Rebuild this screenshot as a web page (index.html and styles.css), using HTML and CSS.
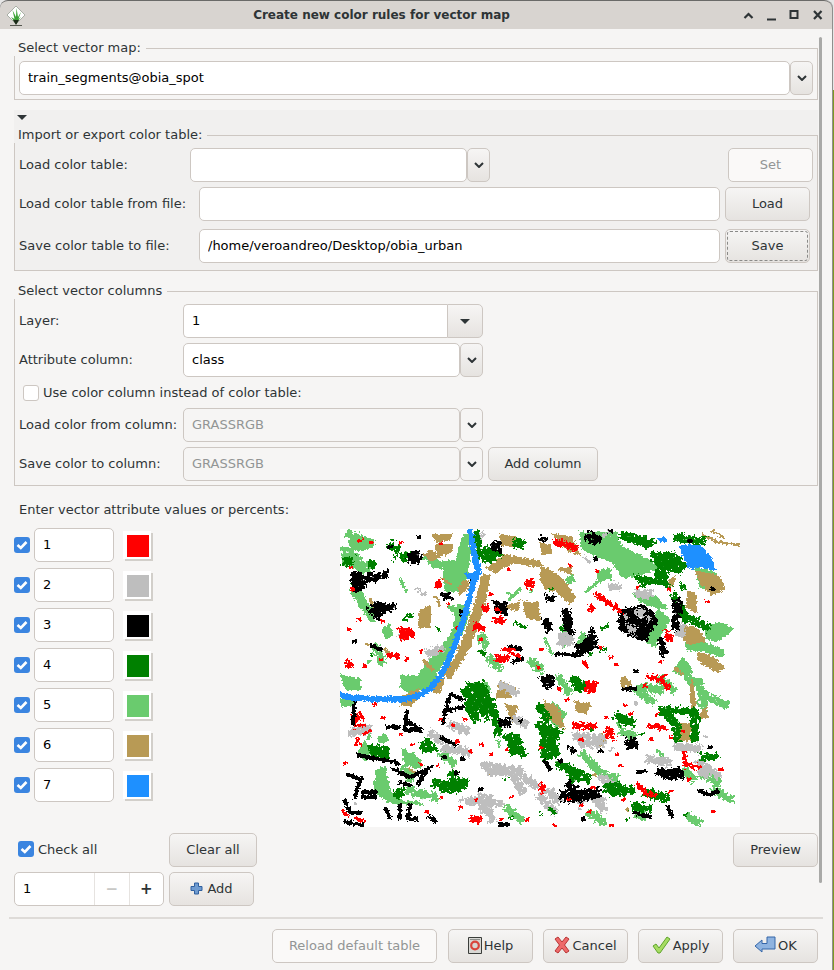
FILE: index.html
```html
<!DOCTYPE html>
<html lang="en">
<head>
    <meta charset="UTF-8">
    <title>Create new color rules for vector map</title>
    <link rel="stylesheet" href="styles.css">
</head>
<body>
<div class="window">
    <div class="titlebar">
        <div class="logo">
            <svg width="20" height="22" viewBox="0 0 20 22">
                <path d="M10 1 19 10 10 19 1 10Z" fill="#fff" stroke="#a9b0a6"/>
                <path d="M4 20.500h12" stroke="#55574f"/>
                <path d="M10 19 5 12 8.500 14 6.500 5 10 12 10.500 3 12 12 15 7 12.500 14 15 12Z" fill="#3aa335"/>
                <path d="M10 20 7 15h6Z" fill="#1c2a18"/>
            </svg>
        </div>
        <div class="title">Create new color rules for vector map</div>
        <div class="controls">
            <svg width="89" height="12" viewBox="0 0 89 12">
                <path d="M1.500 9 5.500 5 9.500 9" fill="none" stroke="#2e3436" stroke-width="2.200"/>
                <path d="M24 10.500h9" stroke="#2e3436" stroke-width="2"/>
                <path d="M47.500 2h7v7h-7Z" fill="none" stroke="#2e3436" stroke-width="2"/>
                <path d="M71 2 78.500 10M78.500 2 71 10" stroke="#2e3436" stroke-width="2.200"/>
            </svg>
        </div>
    </div>

    <div class="scrollbar"></div>

    <div class="content">
        <fieldset class="group first">
            <legend>Select vector map:</legend>
            <div class="row">
                <input class="entry grow" value="train_segments@obia_spot">
                <button class="drop"><svg class="chev" viewBox="0 0 10 6"><path d="M1 1 5 5 9 1"/></svg></button>
            </div>
        </fieldset>

        <div class="expander">
            <div class="arrow"><span class="tri"></span></div>
            <fieldset class="group">
                <legend>Import or export color table:</legend>
                <div class="row">
                    <label class="lbl w171">Load color table:</label>
                    <input class="entry w277">
                    <button class="drop"><svg class="chev" viewBox="0 0 10 6"><path d="M1 1 5 5 9 1"/></svg></button>
                    <button class="btn set" disabled>Set</button>
                </div>
                <div class="row gap5">
                    <label class="lbl w180">Load color table from file:</label>
                    <input class="entry w521">
                    <button class="btn side">Load</button>
                </div>
                <div class="row gap8">
                    <label class="lbl w180">Save color table to file:</label>
                    <input class="entry w521" value="/home/veroandreo/Desktop/obia_urban">
                    <button class="btn side focus">Save</button>
                </div>
            </fieldset>
        </div>

        <fieldset class="group third">
            <legend>Select vector columns</legend>
            <div class="row">
                <label class="lbl w164">Layer:</label>
                <input class="entry w264 joined" value="1">
                <button class="layer-btn"><span class="tri"></span></button>
            </div>
            <div class="row gap5">
                <label class="lbl w164">Attribute column:</label>
                <input class="entry w277" value="class">
                <button class="drop"><svg class="chev" viewBox="0 0 10 6"><path d="M1 1 5 5 9 1"/></svg></button>
            </div>
            <div class="row usecol">
                <span class="check off"></span>
                <span class="lbl">Use color column instead of color table:</span>
            </div>
            <div class="row">
                <label class="lbl w164">Load color from column:</label>
                <input class="entry w277" value="GRASSRGB" disabled>
                <button class="drop flat"><svg class="chev" viewBox="0 0 10 6"><path d="M1 1 5 5 9 1"/></svg></button>
            </div>
            <div class="row gap5">
                <label class="lbl w164">Save color to column:</label>
                <input class="entry w277" value="GRASSRGB" disabled>
                <button class="drop flat"><svg class="chev" viewBox="0 0 10 6"><path d="M1 1 5 5 9 1"/></svg></button>
                <button class="btn addcol">Add column</button>
            </div>
        </fieldset>

        <div class="enter lbl">Enter vector attribute values or percents:</div>

        <div class="values">
            <div class="rules">
                <div class="rule"><span class="check"><svg viewBox="0 0 16 16"><path d="M3.500 8 6.800 11 12.500 5"/></svg></span><input class="entry num" value="1"><span class="swatch c1"></span></div>
                <div class="rule"><span class="check"><svg viewBox="0 0 16 16"><path d="M3.500 8 6.800 11 12.500 5"/></svg></span><input class="entry num" value="2"><span class="swatch c2"></span></div>
                <div class="rule"><span class="check"><svg viewBox="0 0 16 16"><path d="M3.500 8 6.800 11 12.500 5"/></svg></span><input class="entry num" value="3"><span class="swatch c3"></span></div>
                <div class="rule"><span class="check"><svg viewBox="0 0 16 16"><path d="M3.500 8 6.800 11 12.500 5"/></svg></span><input class="entry num" value="4"><span class="swatch c4"></span></div>
                <div class="rule"><span class="check"><svg viewBox="0 0 16 16"><path d="M3.500 8 6.800 11 12.500 5"/></svg></span><input class="entry num" value="5"><span class="swatch c5"></span></div>
                <div class="rule"><span class="check"><svg viewBox="0 0 16 16"><path d="M3.500 8 6.800 11 12.500 5"/></svg></span><input class="entry num" value="6"><span class="swatch c6"></span></div>
                <div class="rule"><span class="check"><svg viewBox="0 0 16 16"><path d="M3.500 8 6.800 11 12.500 5"/></svg></span><input class="entry num" value="7"><span class="swatch c7"></span></div>
            </div>

            <svg class="map" width="400" height="298" viewBox="0 0 400 298" shape-rendering="crispEdges">
                <defs>
                    <filter id="rough" filterUnits="userSpaceOnUse" x="0" y="0" width="400" height="298" color-interpolation-filters="sRGB">
                        <feTurbulence type="fractalNoise" baseFrequency="0.4" numOctaves="2" seed="4"/>
                        <feDisplacementMap in="SourceGraphic" scale="5" xChannelSelector="R" yChannelSelector="G"/>
                    </filter>
                    <filter id="speck" filterUnits="userSpaceOnUse" x="0" y="0" width="400" height="298" color-interpolation-filters="sRGB">
                        <feTurbulence type="fractalNoise" baseFrequency="0.32" numOctaves="2" seed="9" result="noise"/>
                        <feDisplacementMap in="SourceGraphic" in2="noise" scale="9" xChannelSelector="R" yChannelSelector="G" result="moved"/>
                        <feColorMatrix in="noise" type="matrix" values="0 0 0 0 0  0 0 0 0 0  0 0 0 0 0  0 0 14 0 -3" result="mask"/>
                        <feComposite in="moved" in2="mask" operator="in"/>
                    </filter>
                </defs>

                <g filter="url(#rough)">
                    <g class="lgreen">
                        <path d="M8 12 14 9 30 9 33 17 22 22 12 21Z M4 28 15 25 17 33 27 40 22 46 12 36 3 36Z M15 62 22 60 25 72 34 82 30 90 20 78Z M42 100 50 95 53 106 46 110Z"/>
                        <path d="M80 30 92 22 100 33 116 31 122 8 128 5 130 30 126 50 121 62 105 62 104 40 92 38 88 31Z"/>
                        <path d="M108 78 126 76 130 84 124 100 116 118 108 125 96 146 78 146 86 135 100 120 112 104 116 88Z"/>
                        <path d="M60 146 105 146 96 155 70 165 60 158Z M0 146 20 150 20 160 6 160Z M0 170 13 172 13 176 2 178Z"/>
                        <path d="M240 3 277 4 280 16 313 33 320 39 300 46 283 49 272 33 253 26 242 19Z"/>
                        <path d="M318 79 330 91 313 119 305 111Z M345 111 363 113 384 121 382 128 360 121 347 121Z M365 99 380 93 393 100 377 113 365 109Z M333 143 343 128 353 143 345 148Z"/>
                        <path d="M343 146 363 150 362 156 350 158Z M355 39 377 44 377 59 360 59Z M257 42 270 39 272 51 258 50Z M293 64 317 68 328 79 318 79 300 73Z"/>
                        <path d="M138 156 148 154 150 162 140 164Z M225 50 232 46 235 52 228 56Z M38 208 46 205 48 212 40 214Z M24 212 32 222 26 232 18 224Z M36 242 45 238 50 262 62 272 80 272 82 276 50 274 34 262Z M62 220 74 225 84 236 76 240 64 232Z M222 97 226 94 227 116 222 120Z M241 102 247 106 243 120 238 118Z"/>
                        <path d="M205 186 212 172 226 185 218 200Z M296 277 306 282 304 292 294 288Z"/>
                    </g>
                    <g class="lgreen-ln">
                        <path d="M260 25 272 20M247 62 264 48M180 60 170 70M60 50 66 62M158 212 160 216M205 110 212 125"/>
                        <path d="M30 205 28 210M282 200 278 195M318 222 322 226M335 190 340 200M190 62h1M168 64h1M40 128h1M28 132h1"/>
                    </g>
                    <g class="tan">
                        <path d="M147 39 165 26 200 32 200 38 172 34 155 44Z M143 45 150 45 146 70 138 95 130 118 118 138 110 150 103 146 115 130 125 105 134 78Z"/>
                        <path d="M160 5 176 8 172 18 162 16Z M95 16 112 15 112 23 98 28Z M92 6 112 5 110 11 96 13Z M84 26 90 20 100 28 90 32Z M130 55 120 66 118 60 124 50Z"/>
                        <path d="M200 36 212 42 222 50 236 68 230 75 216 62 205 60 200 50Z M200 14 210 16 212 24 202 26Z M212 5 232 8 240 26 228 22Z M218 40 230 38 232 46Z M183 72 198 74 200 92 186 88Z M165 78 180 72 178 82Z"/>
                        <path d="M343 96 358 100 366 112 347 116 343 108Z M357 123 370 126 385 139 375 143 357 130Z M348 61 357 66 356 84 346 78Z M325 55 335 48 333 58Z M355 42 378 46 385 60 372 66 362 56Z M80 82 90 76 90 98 78 98Z"/>
                        <path d="M60 168 78 160 78 170 72 176 60 176Z M88 160 104 150 100 165Z M165 175 178 178 172 192Z M204 172 218 178 224 200 206 188Z M235 172 250 175 246 185 236 182Z M284 147 292 156 280 158 280 152Z M254 212 262 204 266 212 260 218Z M337 194 352 194 350 211 337 211Z M352 150 356 175 352 180 350 165Z M362 180 366 176 368 188 360 190Z M160 152 176 160 170 168 156 168Z"/>
                    </g>
                    <g class="tan-ln">
                        <path d="M363 6 378 13 400 16M372 2 384 8M30 70 34 80M103 50 110 55M96 68 100 76M128 60 134 56"/>
                        <path d="M342 145 336 140M84 132 92 140M45 120 50 126M26 115h1M150 244h1M254 245h1M286 280h1M208 205h1M70 240 74 244"/>
                    </g>
                </g>

                <g filter="url(#speck)">
                    <g class="lgreen-fat">
                        <path d="M5 29 28 39M15 63 32 89M4 20 18 30M10 5 30 14M243 226 260 243M360 159 363 176M363 165 385 176M345 243 352 249M363 246 377 253M350 288 357 293M303 158 320 161M283 203 293 206M262 246 275 249M103 226 112 233M142 109 145 116M192 133 200 139M35 118 42 132M65 240 70 250M168 280 180 290M250 285 262 292M298 162 312 172M220 150 228 162M320 150 332 160M150 130 158 138M375 262 390 270M70 262 95 268"/>
                    </g>
                    <g class="grey">
                        <path d="M233 203 263 208 264 218 240 218Z M138 264 152 266 150 286 140 284Z M142 236 182 238 180 246 150 246Z M295 61 313 62 312 68 296 68Z M218 103 233 104 232 116 218 116Z M268 54 283 56 282 60 270 60Z"/>
                        <path d="M310 228 327 228 326 234 312 234Z M335 214 357 216 356 223 336 222Z M358 232 372 240 368 250 358 246Z M257 266 265 268 264 279 258 278Z M236 268 245 272 240 280Z M337 98 346 92 344 108 336 106Z"/>
                    </g>
                    <g class="grey-fat">
                        <path d="M145 236 178 243M162 156 175 163M105 219 127 223M185 249 195 256M112 196 125 201M237 208 262 209M262 249 270 253M253 269 263 279M210 263 217 271M310 231 327 233M338 218 357 219M360 234 377 246M145 270 152 290M130 272 160 274M92 205 100 210M12 204 28 200M175 190 185 195M90 124 100 120M200 268 214 282M175 250 182 262"/>
                    </g>
                    <g class="grey-ln">
                        <path d="M78 60 84 66M140 10 143 4M264 6 270 2M246 29 250 34M296 174h1M270 220h1M320 196h1M364 207h1M120 270h1M112 240h1M15 274h1M60 106 62 110"/>
                    </g>
                    <g class="dgreen">
                        <path d="M280 3 300 6 316 13 307 19 290 13 280 9Z M310 24 333 23 347 36 340 46 327 39 327 53 332 59 313 54 303 58 293 46 313 49 317 39Z"/>
                        <path d="M133 1 139 1 142 29 136 30Z M142 19 155 18 162 26 150 34 142 32Z M173 9 183 10 183 18 174 18Z M3 30 14 28 12 36 2 36Z M30 30 36 34 34 40 28 38Z M60 25 70 22 72 30 60 32Z M46 16 54 12 56 22 48 20Z"/>
                        <path d="M125 153 140 156 148 170 155 185 145 188 130 178 125 165Z M167 204 178 204 186 224 170 226Z M28 216 48 216 48 228 30 228Z M95 254 108 260 116 246 126 258 118 264 100 262Z M80 214 88 210 98 222 82 224Z M53 262 66 258 60 270 53 268Z"/>
                        <path d="M200 193 214 198 220 226 205 232 200 226Z M220 233 232 236 247 250 232 254Z M267 256 278 252 293 264 270 268Z M307 263 327 266 326 272 310 270Z M278 186 292 190 292 196 280 196Z M360 224 378 226 378 230 362 232Z M293 274 308 276 306 284 296 282Z M340 52 346 58 340 62Z M234 160 244 152 250 158 238 164Z"/>
                    </g>
                    <g class="dgreen-fat">
                        <path d="M125 163 142 156 152 179M128 176 135 189M152 176 158 203M168 209 182 224M32 221 45 226M95 254 112 256 125 253M112 246 118 259M200 196 217 203 207 223M200 179 207 189M220 236 233 241 247 249M233 151 242 156M278 188 292 193M268 259 290 261M307 264 325 268M323 181 355 183 355 209M323 183 337 196 337 209M295 278 308 279"/>
                        <path d="M337 9 363 12M343 86 367 98M335 68 346 90"/>
                    </g>
                    <g class="dgreen-ln">
                        <path d="M230 90 222 100M55 30 60 14M72 86 64 90M140 122 145 126M175 94 186 98"/>
                        <path d="M12 55h1M30 125h1M98 100h1M210 60h1M250 125h1M262 120h1M262 100 268 96M286 290h1M146 190h1M164 250h1M200 285h1M310 260h1M300 205h1M345 285h1M170 288h1M250 200h1M210 280 214 284"/>
                    </g>
                    <g class="black">
                        <path d="M67 24 78 22 82 30 76 36 68 34Z M10 42 22 42 26 60 14 64Z M32 76 38 72 52 78 44 80 40 90 34 90Z M102 63 110 64 112 70 104 70Z M120 82 124 80 125 90 120 91Z M153 72 166 74 166 86 156 84Z M150 14 160 12 162 24 152 22Z"/>
                        <path d="M245 6 252 2 262 10 256 16 248 14Z M200 7 207 8 206 12 200 12Z M280 80 306 77 318 90 306 112 292 108 278 100Z M222 80 230 80 234 108 224 100Z M236 115 246 110 252 98 256 110 258 118 246 124 236 128Z M318 110 322 108 328 124 322 128Z M334 72 340 68 342 76 338 102 332 100Z"/>
                        <path d="M205 66 216 66 214 71 206 71Z M203 90 208 88 212 100 206 104Z M200 148 212 146 216 156 204 160Z M158 190 170 190 170 198 160 198Z M285 209 296 210 298 218 288 220Z M324 242 340 238 342 248 330 252 322 248Z M224 256 240 262 260 268 240 272 222 272 236 264Z M228 218 236 220 232 226Z"/>
                    </g>
                    <g class="black-fat">
                        <path d="M320 243 340 246M230 256 240 269M223 266 257 263M25 51 45 46M32 82 52 78"/>
                    </g>
                    <g class="grey">
                        <path d="M296 80 304 80 304 88 297 88Z M286 96 296 98 292 106Z M282 86 286 84 288 92Z M306 86 312 88 308 94Z"/>
                    </g>
                    <g class="red">
                        <path d="M58 98 72 100 75 108 62 111Z M95 52 100 50 102 59 95 58Z M136 92 146 100 132 100Z M153 89 165 88 164 94 154 94Z M142 77 148 76 148 83 142 82Z M47 124 60 124 58 129 48 128Z M5 132 11 131 12 139 6 138Z M155 126 168 126 168 132 156 132Z M185 52 193 50 193 58 186 59Z"/>
                        <path d="M215 10 238 17 237 22 215 16Z M248 76 255 76 254 83 249 82Z M325 102 332 104 333 112 326 112Z M130 287 141 287 142 293 132 294Z M233 193 257 195 256 199 234 199Z M265 199 272 200 275 211 266 208Z M245 152 256 152 256 162 246 164Z M200 254 204 254 205 264 200 264Z M12 183 20 186 14 200Z"/>
                    </g>
                    <g class="red-fat">
                        <path d="M257 66 281 82M308 147 322 152 328 158M310 197 324 199M344 225 346 236 358 238M298 256 306 264 313 266"/>
                    </g>
                </g>

                <g filter="url(#rough)">
                    <g class="black-ln">
                        <path d="M15 170 13 194M110 165 103 193M110 165 122 170M105 182 122 178M67 183 65 201M67 192 80 200M65 201 80 201M48 198 58 198M18 226 58 234"/>
                        <path d="M53 240 70 248 88 240 78 254M60 254 70 256M8 246 22 250M20 252 15 268M23 263 35 263 35 268 23 268ZM5 272 10 284 20 284M5 293 22 296M60 277 60 289M70 276 68 290 76 290M46 280 50 288M102 209 115 216"/>
                        <path d="M32 117 40 120M170 118 180 120M174 132 182 130M217 125 237 126M360 262 370 266 377 262M328 278 332 288M295 284 310 288M283 160 295 160M295 142h1M205 232 210 240M298 243 305 242M132 52h1"/>
                        <path d="M30 45h1M50 18h1M78 8h1M14 112h1M270 2h1M372 60h1M104 228h1M180 192h1M122 230h1M140 260h1M220 232h1M260 222h1M330 285h1M243 290h1M116 244h1M160 296 168 296M90 288 95 292M370 218h1M350 12h1M255 30h1"/>
                    </g>
                    <g class="red-ln">
                        <path d="M322 148 326 146M16 196 24 196M20 184 24 190M24 205 30 202M16 216 18 210"/>
                        <path d="M18 12 22 11M170 124 180 128M162 120 174 120M244 134 248 138M156 80 160 82M3 283 8 286M15 289 24 292"/>
                        <path d="M10 38h1M12 60h1M30 13h1M42 92h1M60 13h1M100 14h1M8 100h1M18 90h1M24 136h1M40 130h1M66 130h1M80 122h1M100 122h1M108 75h1M116 98h1M140 110h1M150 65h1M168 40h1M198 138h1M200 120h1M229 36h1M256 42h1M270 128h1M275 135h1M328 60h1M366 72h1M320 132h1M296 58h1M260 118h1M240 276h1M248 282h1M218 160h1M226 170h1M284 176h1M290 184h1M304 156h1M316 185h1M342 202h1M310 210h1M276 225h1M280 236h1M348 250h1M252 258h1M330 262h1M283 270h1M270 296h1M100 190h1M112 196h1M124 190h1M140 215h1M130 222h1M116 212h1M150 225h1M166 220h1M96 236h1M80 235h1M72 215h1M60 205h1M42 188h1M34 175h1M20 215h1M4 234h1M100 268h1M86 282h1M120 278h1M136 270h1M160 290h1M170 268h1M186 290h1M200 218h1M240 210h1M265 188h1M330 208h1M372 282h1M380 240h1M214 296h1M228 270h1"/>
                    </g>
                    <g class="blue-ln">
                        <path d="M130 1 133 18 138 42 134 52 128 75 122 95 115 115 107 135 100 148 90 160 78 167 65 170 40 170 15 169 0 166"/>
                    </g>
                    <g class="blue">
                        <path d="M340 17 360 16 368 25 372 30 375 41 358 38 350 40 344 30Z M318 9 324 8 327 12 320 13Z M124 45 140 44 136 50 128 50Z"/>
                    </g>
                </g>
            </svg>
        </div>

        <div class="row between">
            <div class="checkall"><span class="check"><svg viewBox="0 0 16 16"><path d="M3.500 8 6.800 11 12.500 5"/></svg></span><span class="lbl">Check all</span></div>
            <button class="btn clear">Clear all</button>
            <button class="btn preview">Preview</button>
        </div>
        <div class="row gap5">
            <div class="spin">
                <input class="spin-val" value="1">
                <span class="spin-btn off">&minus;</span>
                <span class="spin-btn">+</span>
            </div>
            <button class="btn add">
                <svg width="13" height="13" viewBox="0 0 13 13"><path d="M4.500 1h4v3.500H12v4H8.500V12h-4V8.500H1v-4h3.500Z" fill="#6f9bd0" stroke="#2f5f9e"/></svg>
                Add
            </button>
        </div>
    </div>

    <div class="footer">
        <button class="btn reload" disabled>Reload default table</button>
        <button class="btn foot">
            <svg width="14" height="17" viewBox="0 0 14 17"><path d="M.500.500h13v16H.500Z" fill="#d8d8d4" stroke="#3a3d3a"/><circle cx="7" cy="8.500" r="3.800" fill="none" stroke="#d9453c" stroke-width="2.200"/><path d="M2 2.500h10" stroke="#8a8d8a"/></svg>
            Help
        </button>
        <button class="btn foot">
            <svg width="16" height="18" viewBox="0 0 16 18"><path d="M1 3 4 1 8 6 12 1 15 3 10.500 9 15 15 12 17 8 12 4 17 1 15 5.500 9Z" fill="#ee6a6a" stroke="#b83434"/></svg>
            Cancel
        </button>
        <button class="btn foot">
            <svg width="19" height="18" viewBox="0 0 19 18"><path d="M1 10 4 8 7 12 15 1 18 3 8 17 6 17Z" fill="#a6dc62" stroke="#5fa52c"/></svg>
            Apply
        </button>
        <button class="btn foot">
            <svg width="22" height="18" viewBox="0 0 22 18"><path d="M1 10 8 4V7.500H13V1H21V13H8V16Z" fill="#8eb3e0" stroke="#3566a8"/></svg>
            OK
        </button>
    </div>
</div>
</body>
</html>
```

FILE: styles.css
```css
* {
    box-sizing: border-box;
}
body {
    margin: 0;
    width: 834px;
    height: 970px;
    overflow: hidden;
    background: linear-gradient(#e6e6e6 0 90px, #7c9a22 90px);
    font-family: "DejaVu Sans", sans-serif;
    font-size: 13px;
    color: #2e3436;
}
.window {
    position: relative;
    width: 833px;
    height: 970px;
    background: #f6f5f4;
    border-right: 1px solid #8f8f8d;
    border-radius: 8px 8px 0 0;
}
.titlebar {
    display: flex;
    align-items: center;
    height: 29px;
    background: #d8d4d0;
    border-top: 1px solid #6a6a68;
    border-radius: 8px 8px 0 0;
}
.logo {
    width: 30px;
    padding: 2px 0 0 6px;
}
.logo svg {
    display: block;
}
.title {
    flex: 1;
    text-align: center;
    font-size: 12px;
    font-weight: bold;
}
.controls {
    width: 99px;
}
.controls svg {
    display: block;
    margin-left: 10px;
}
.scrollbar {
    position: absolute;
    left: 819px;
    top: 37px;
    width: 3px;
    height: 846px;
    background: #a9a9a7;
    border-radius: 2px;
}
.content {
    width: 804px;
    margin-left: 14px;
    padding-top: 11px;
}
.group {
    margin: 0;
    min-width: 0;
    padding: 5px 4px 4px 4px;
    border: 1px solid #cdc7c2;
}
.group legend {
    margin-left: -5px;
    padding: 0 5px 0 4px;
    height: 16px;
    line-height: 16px;
    background: #f6f5f4;
}
.expander {
    margin-top: 10px;
    background: #f1f0ef;
}
.expander legend {
    background: #f1f0ef;
}
.expander .group {
    padding-bottom: 7px;
}
.arrow {
    height: 17px;
    padding: 5px 0 0 3px;
}
.tri {
    display: block;
    width: 0;
    height: 0;
    border-left: 5px solid transparent;
    border-right: 5px solid transparent;
    border-top: 5px solid #2e3436;
}
.third {
    margin-top: 12px;
}
.row {
    display: flex;
    align-items: center;
    height: 34px;
}
.gap5 {
    margin-top: 5px;
}
.gap8 {
    margin-top: 8px;
}
.lbl {
    white-space: nowrap;
}
.row .lbl {
    padding-bottom: 2px;
}
.w164 {
    width: 164px;
}
.w171 {
    width: 171px;
}
.w180 {
    width: 180px;
}
.entry {
    height: 34px;
    padding: 0 8px 2px;
    border: 1px solid #cdc7c2;
    border-radius: 5px;
    background: #fff;
    color: #000;
    font: 13px "DejaVu Sans", sans-serif;
    outline: none;
}
.entry:disabled {
    background: #f6f5f4;
    color: #929595;
}
.grow {
    flex: 1;
}
.w277 {
    width: 277px;
}
.w264 {
    width: 264px;
}
.w521 {
    width: 521px;
}
.joined {
    border-right: 0;
    border-radius: 5px 0 0 5px;
}
button {
    font: 13px "DejaVu Sans", sans-serif;
    color: #2e3436;
    padding: 0;
}
.drop {
    display: flex;
    align-items: center;
    justify-content: center;
    width: 23px;
    height: 34px;
    border: 1px solid #cdc7c2;
    border-radius: 5px;
    background: linear-gradient(#f6f5f4, #e6e3e0);
}
.drop.flat {
    background: #f6f5f4;
}
.chev {
    width: 10px;
    height: 6px;
    fill: none;
    stroke: #2e3436;
    stroke-width: 2;
}
.layer-btn {
    display: flex;
    align-items: center;
    justify-content: center;
    width: 36px;
    height: 34px;
    border: 1px solid #cdc7c2;
    border-radius: 0 5px 5px 0;
    background: linear-gradient(#f6f5f4, #e6e3e0);
}
.btn {
    height: 34px;
    padding-bottom: 2px;
    border: 1px solid #cdc7c2;
    border-radius: 5px;
    background: linear-gradient(#f6f5f4, #e6e3e0);
    white-space: nowrap;
}
.btn:disabled {
    background: #faf9f8;
    color: #929595;
}
.set {
    width: 85px;
    margin-left: 238px;
}
.side {
    width: 85px;
    margin-left: 5px;
}
.focus {
    outline: 1px dashed #8a8a88;
    outline-offset: -3px;
}
.addcol {
    width: 110px;
    margin-left: 5px;
}
.usecol {
    height: 15px;
    margin: 8px 0;
    padding-left: 4px;
}
.usecol .lbl {
    margin-left: 4px;
    padding-bottom: 0;
}
.enter {
    height: 16px;
    line-height: 18px;
    margin: 15px 0 11px 5px;
}
.values {
    display: flex;
    height: 305px;
}
.rules {
    width: 326px;
}
.rule {
    display: flex;
    align-items: center;
    height: 34px;
    margin-bottom: 6px;
}
.check {
    display: block;
    flex: none;
    width: 16px;
    height: 16px;
    background: #3b85e0;
    border-radius: 3px;
}
.check svg {
    display: block;
    fill: none;
    stroke: #fff;
    stroke-width: 2.600;
}
.check.off {
    background: #fff;
    border: 1px solid #cdc7c2;
}
.num {
    width: 80px;
    margin-left: 4px;
}
.swatch {
    display: block;
    width: 28px;
    height: 28px;
    margin-left: 9px;
    border: solid #fff;
    border-width: 4px 2px 2px 4px;
    box-shadow: 2px 2px 0 #d2cfca;
}
.c1 { background: #ff0000; }
.c2 { background: #bebebe; }
.c3 { background: #000000; }
.c4 { background: #008000; }
.c5 { background: #6acb6e; }
.c6 { background: #b89a55; }
.c7 { background: #1e90ff; }

.map {
    display: block;
    margin-top: 1px;
    background: #fff;
}
.lgreen { fill: #6acb6e; stroke: #6acb6e; }
.tan { fill: #b89a55; stroke: #b89a55; }
.grey { fill: #bebebe; stroke: #bebebe; }
.dgreen { fill: #008000; stroke: #008000; }
.black { fill: #000; stroke: #000; }
.red { fill: #f00; stroke: #f00; }
.blue { fill: #1e90ff; stroke: #1e90ff; }
.lgreen-ln, .tan-ln, .grey-ln, .dgreen-ln, .black-ln, .red-ln, .blue-ln,
.lgreen-fat, .grey-fat, .dgreen-fat, .black-fat, .red-fat {
    fill: none;
    stroke-width: 3;
    stroke-linecap: square;
}
.lgreen-ln, .lgreen-fat { stroke: #6acb6e; }
.tan-ln { stroke: #b89a55; }
.grey-ln, .grey-fat { stroke: #bebebe; }
.dgreen-ln, .dgreen-fat { stroke: #008000; }
.black-ln, .black-fat { stroke: #000; }
.red-ln, .red-fat { stroke: #f00; }
.blue-ln { stroke: #1e90ff; stroke-width: 6; }
.black-ln { stroke-width: 4; }
.red-fat { stroke-width: 5; }
.lgreen-fat, .grey-fat, .dgreen-fat, .black-fat { stroke-width: 8; }

.between {
    justify-content: flex-start;
}
.checkall {
    display: flex;
    align-items: center;
    width: 155px;
    padding: 0 0 2px 4px;
}
.checkall .lbl {
    margin-left: 4px;
    padding-bottom: 0;
}
.clear {
    width: 88px;
}
.preview {
    width: 85px;
    margin-left: auto;
}
.spin {
    display: flex;
    width: 150px;
    height: 34px;
    border: 1px solid #cdc7c2;
    border-radius: 5px;
    background: #fff;
}
.spin-val {
    width: 79px;
    padding: 0 8px 2px;
    border: 0;
    background: transparent;
    font: 13px "DejaVu Sans", sans-serif;
    color: #000;
    outline: none;
}
.spin-btn {
    display: flex;
    align-items: center;
    justify-content: center;
    width: 35px;
    border-left: 1px solid #e6e3e0;
    font-size: 15px;
    font-weight: bold;
}
.spin-btn.off {
    color: #c8c8c6;
}
.add {
    display: flex;
    align-items: center;
    justify-content: center;
    gap: 4px;
    width: 85px;
    margin-left: 5px;
}
.footer {
    display: flex;
    justify-content: flex-end;
    gap: 10px;
    width: 814px;
    margin: 11px 0 0 9px;
    padding: 10px 5px 0 0;
    border-top: 2px solid #dedbd8;
}
.foot {
    display: flex;
    align-items: center;
    justify-content: center;
    gap: 2px;
    width: 85px;
}
.reload {
    width: 165px;
    margin-right: 1px;
}
```
